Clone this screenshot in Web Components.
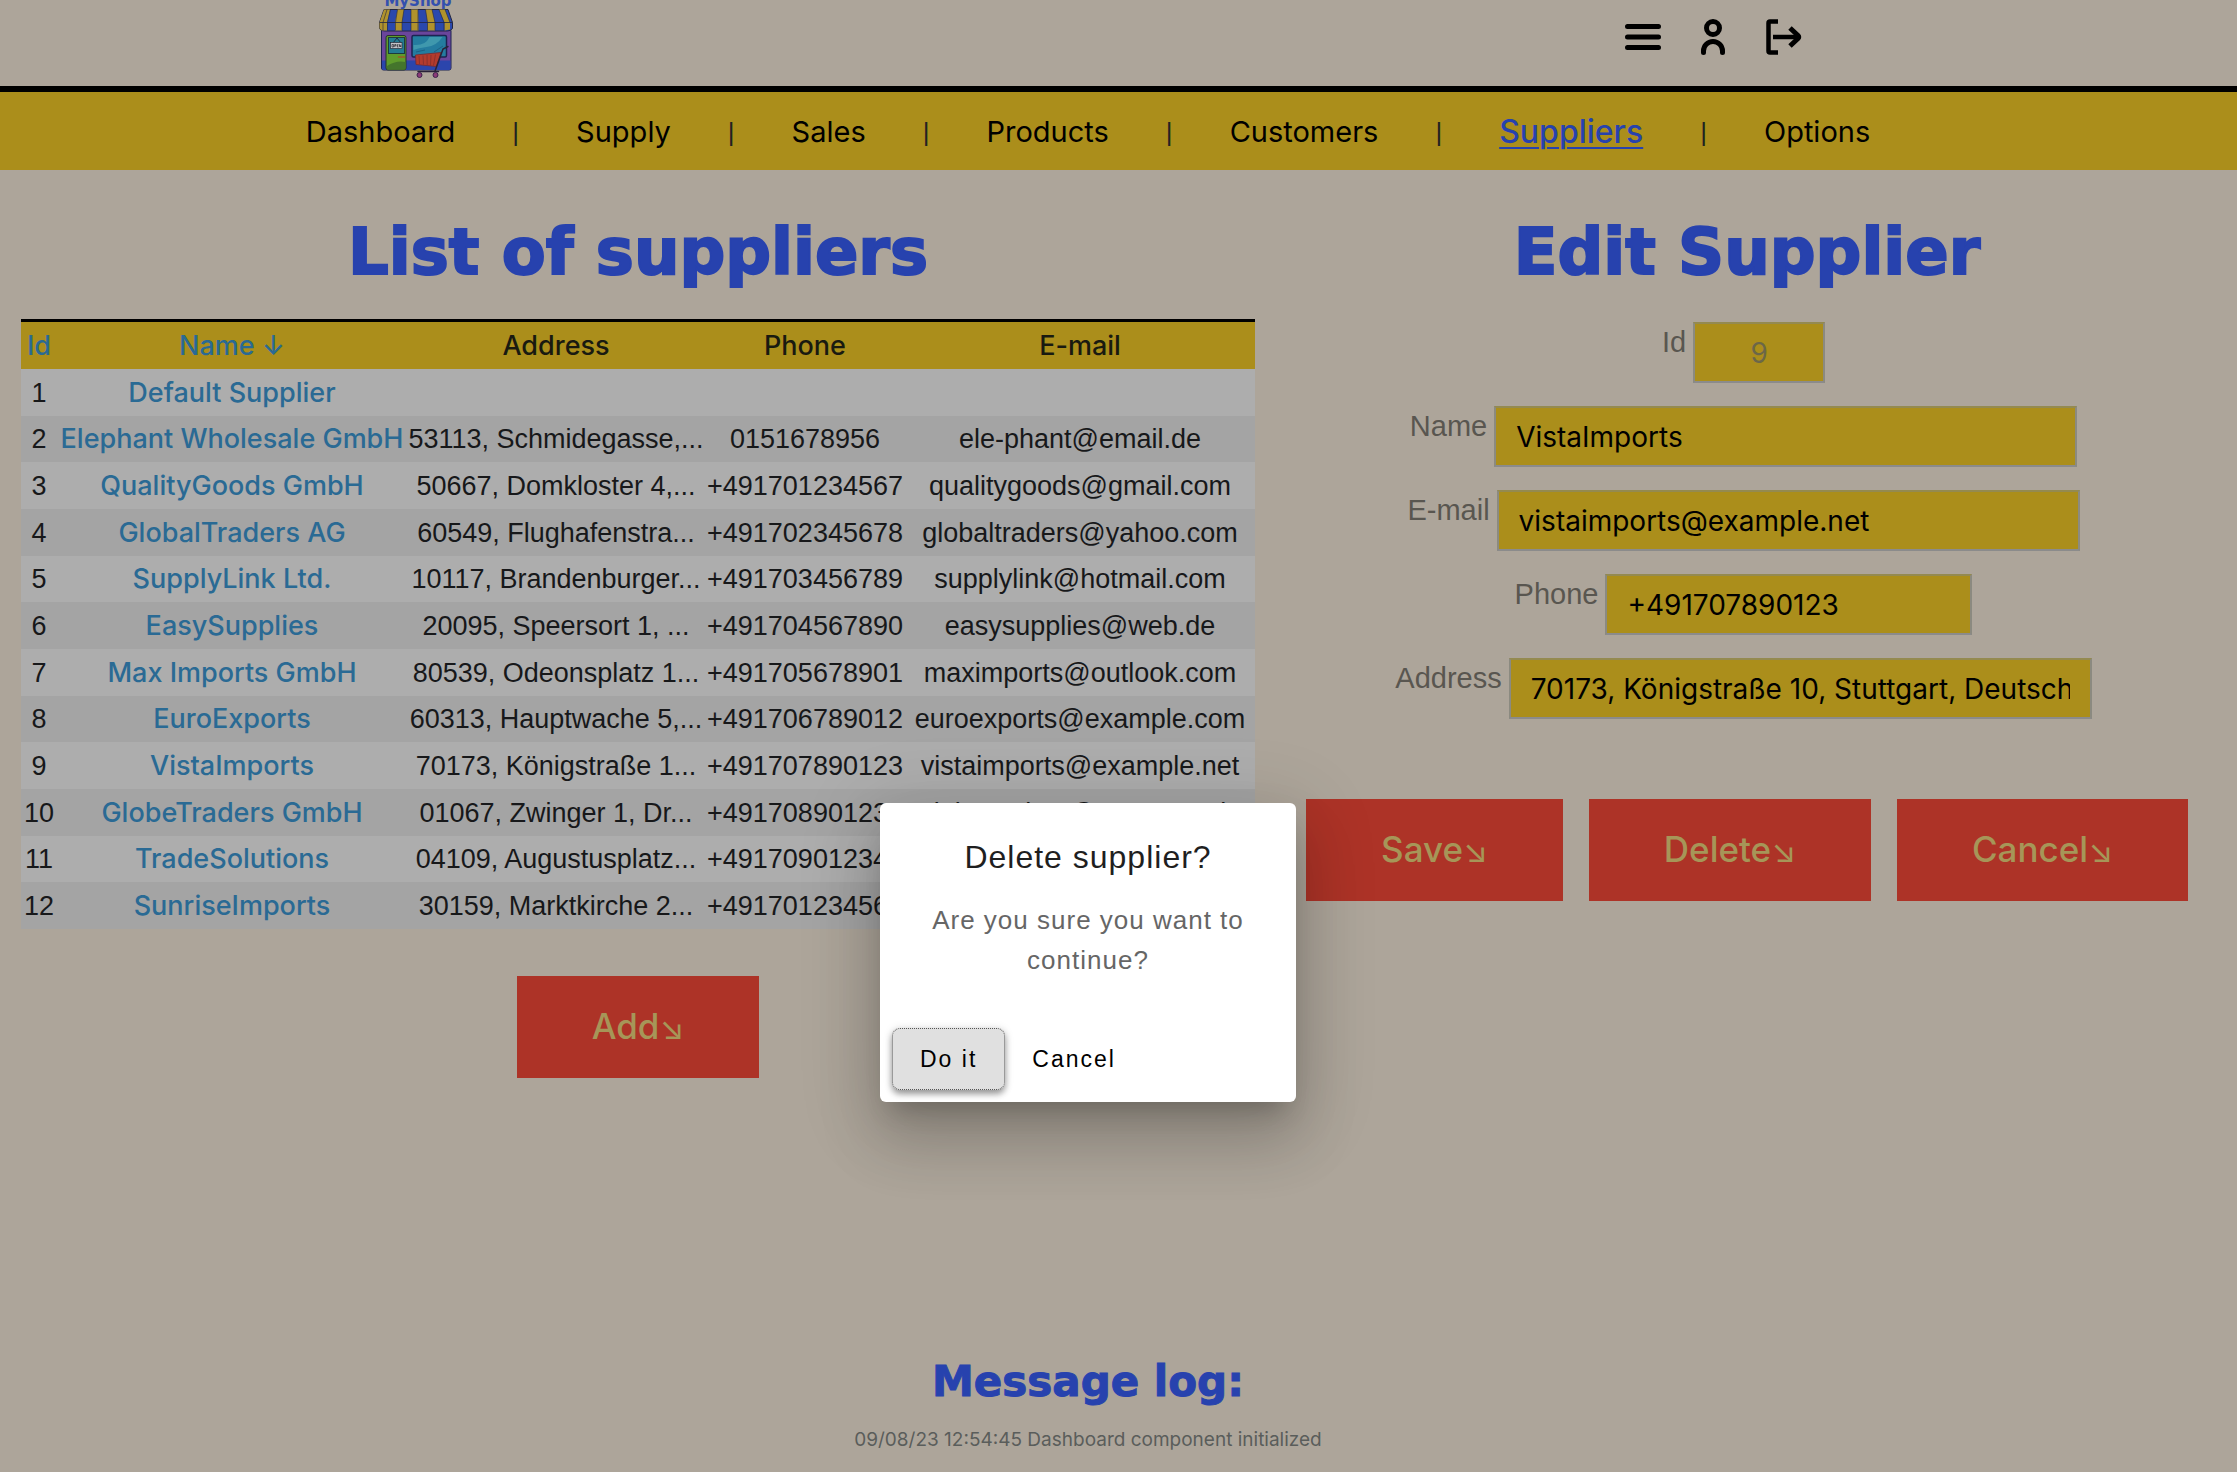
<!DOCTYPE html>
<html lang="en">
<head>
<meta charset="utf-8">
<title>MyShop – Suppliers</title>
<style>
  html { background: #ada59a; }
  body {
    margin: 0;
    min-height: 100vh;
    display: flex;
    flex-direction: column;
    position: relative;
    overflow-x: hidden;
    font-family: Inter, sans-serif;
    color: #000;
    --gold: #ab8e1b;
    --blue: #2742ae;
    --red: #ad3327;
    --link: #2a6a94;
    --display: "DejaVu Sans", sans-serif;
    --ui: Inter, sans-serif;
    --plain: "Liberation Sans", sans-serif;
  }
</style>
</head>
<body>
<shop-header></shop-header>
<shop-nav></shop-nav>
<shop-main>
  <shop-panel slot="list" heading="List of suppliers">
    <supplier-table></supplier-table>
    <shop-button slot="actions">Add</shop-button>
  </shop-panel>
  <shop-panel slot="edit" heading="Edit Supplier">
    <supplier-form></supplier-form>
    <shop-button slot="actions">Save</shop-button>
    <shop-button slot="actions">Delete</shop-button>
    <shop-button slot="actions">Cancel</shop-button>
  </shop-panel>
</shop-main>
<message-log>09/08/23 12:54:45 Dashboard component initialized</message-log>
<confirm-dialog>
  <span slot="title">Delete supplier?</span>
  Are you sure you want to continue?
</confirm-dialog>

<script>
const define = (name, html) => customElements.define(name, class extends HTMLElement {
  constructor() {
    super();
    this.attachShadow({ mode: "open" }).innerHTML = typeof html === "function" ? html(this) : html;
  }
});

define("shop-header", `
<style>
  :host { display: block; border-bottom: 6px solid #000; }
  header { height: 86px; display: flex; justify-content: space-between; padding: 0 434px 0 376px; }
  .logo { display: block; height: 80px; }
  nav { display: flex; gap: 30px; align-items: center; height: 74px; }
  button { border: 0; background: none; padding: 0; width: 40px; height: 40px; }
  svg { display: block; overflow: hidden; }
  .tool { fill: none; stroke: #000; stroke-width: 5; stroke-linecap: round; }
</style>
<header>
  <a class="logo" href="#home" aria-label="MyShop">
    <svg width="80" height="80" viewBox="376 0 80 80">
      <text x="418" y="6" text-anchor="middle" font-family="DejaVu Sans, sans-serif" font-weight="700" font-size="15" fill="#3350ae">MyShop</text>
      <rect x="381.500" y="29" width="69.500" height="41" rx="2" fill="#6a459c" stroke="#1d2452"/>
      <path d="M382 60.500h68.500v8q0 1.500-2 1.500H384q-2 0-2-1.500z" fill="#2b45ac"/>
      <path d="M384 9.500h64l4.500 13v6q-2 2.500-5 2.500h-63q-4 0-5-2.500v-6z" fill="#2a48ad" stroke="#222640"/>
      <path d="M384 9.500h6l-3 13v8h-5l-2.500-2v-6zM397.500 9.500h6.500l-2 13v8h-7v-8zM411 9.500h7l.5 13v8H411v-8zM425.500 9.500h6.500l3 13v8h-7.500v-8zM439 9.500h6l5 13v7l-5.500 1v-8z" fill="#b0922c"/>
      <path d="M379.500 22.500h73" stroke="#222640" stroke-width=".8"/>
      <path d="M387 9.500l-4 13v8M390.500 9.500l-3 13v8M397.500 9.500l-2 13v8M404 9.500l-2 13v8M411 9.500v21M418 9.500v21M425.500 9.500l2 13v8M432 9.500l3 13v8M439 9.500l5 13v8M445 9.500l5 13" stroke="#222640" stroke-width=".6" fill="none"/>
      <rect x="386" y="35.500" width="20" height="34.500" rx="2" fill="#5f9c2c" stroke="#26322e"/>
      <path d="M387 66q9-6 18.500-4v7.500H387z" fill="#44752c"/>
      <rect x="388.500" y="37.500" width="16" height="16" fill="#247b93" stroke="#1e3b3c"/>
      <path d="M393 43l4-5 4 5" fill="none" stroke="#1b1b29" stroke-width=".8"/>
      <rect x="390.500" y="42.500" width="11.500" height="6" fill="#c4c4c8" stroke="#1b1b29" stroke-width=".6"/>
      <path d="M392 44.500h1.500v2.500H392zM394.700 47v-2.500h1.300v1.300h-1.300M398.500 44.500h-1.200V47h1.200M397.300 45.700h1M399.500 47v-2.500l1.300 2.500v-2.500" fill="none" stroke="#15151d" stroke-width=".6"/>
      <path d="M398.500 57h6" stroke="#9c5a25" stroke-width="1.500" stroke-linecap="round"/>
      <rect x="412" y="35.500" width="34.500" height="21.500" rx="1.500" fill="#247c9f" stroke="#1d2452" stroke-width="1.500"/>
      <path d="M413.500 45q12 1 16-8h13q-6 9-16 10-8 1-13 3z" fill="#3f98ad"/>
      <path d="M416 52l9-2M434 52l9-6" stroke="#1d5f83" stroke-width="1"/>
      <path d="M415.500 55l25.500-2.500-4.500 14-20.500-2z" fill="#b33b2d" stroke="#722a33" stroke-width=".8"/>
      <path d="M419 56l.5 8M423 55.500l.5 9M427 55l.2 10M431 55l-.5 10.500M435.500 54.500l-2 11" stroke="#7d2c2b" stroke-width=".7"/>
      <path d="M448 46.500l-5 2.500-6.500 18-1.500 4M418 71.500h20.500" fill="none" stroke="#282238" stroke-width="1.500" stroke-linecap="round"/>
      <circle cx="419.500" cy="75" r="2.500" fill="#8c3b78" stroke="#3c244b"/>
      <circle cx="435.500" cy="75" r="2.500" fill="#8c3b78" stroke="#3c244b"/>
    </svg>
  </a>
  <nav aria-label="Account">
    <button aria-label="Menu"><svg class="tool" width="40" height="40" viewBox="0 0 40 40"><path d="M4.500 9.500h31M4.500 20h31M4.500 30.500h31"/></svg></button>
    <button aria-label="Profile"><svg class="tool" width="40" height="40" viewBox="0 0 40 40"><circle cx="20" cy="11" r="6.500"/><path d="M10.500 35.500v-1.500a9.500 9.500 0 0 1 19 0v1.500"/></svg></button>
    <button aria-label="Log out"><svg class="tool" width="40" height="40" viewBox="2 0 40 40"><path d="M16 4.500H8q-1.500 0-1.500 1.500v28q0 1.500 1.500 1.500H16" transform="translate(1 0)" stroke-width="4.500" stroke-linecap="butt"/><path d="M12 20H37" stroke-width="4.500" stroke-linecap="butt"/><path d="M29 11l8 7.500q1.500 1.500 0 3L29 29" stroke-width="5" stroke-linecap="butt"/></svg></button>
  </nav>
</header>`);

define("shop-nav", `
<style>
  :host { display: block; background: var(--gold); padding-right: 61px; }
  nav { height: 76px; padding-top: 2px; display: flex; justify-content: center; align-items: center; gap: 57px; font: 29px/40px var(--ui); }
  a { color: #000; text-decoration: none; }
  a[aria-current] { font-size: 32px; font-weight: 500; color: var(--blue); text-decoration: underline; text-decoration-thickness: 2px; text-underline-offset: 4px; }
  span { font: 26px/40px var(--plain); color: #222; }
</style>
<nav>${["Dashboard", "Supply", "Sales", "Products", "Customers", "Suppliers", "Options"].map(t =>
  `<a href="#${t.toLowerCase()}"${t === "Suppliers" ? ' aria-current="page"' : ""}>${t}</a>`).join("<span>|</span>")}</nav>`);

define("shop-main", `
<style>
  :host { display: grid; flex: 1; grid-template-columns: 1276fr 884fr; column-gap: 29px; padding: 48px 48px 0 0; align-items: start; }
</style>
<slot name="list"></slot><slot name="edit"></slot>`);

define("shop-panel", el => `
<style>
  :host { display: block; min-width: 0; }
  h1 { margin: 0; font: 700 64px/68px var(--display); color: var(--blue); text-align: center; -webkit-text-stroke: 2px var(--blue); white-space: nowrap; }
  .body { padding-top: 33px; }
  .actions { display: flex; justify-content: center; gap: 26px; }
  :host([slot="list"]) .actions { padding-top: 47px; }
  :host([slot="edit"]) .actions { padding-top: 80px; }
</style>
<h1>${el.getAttribute("heading")}</h1>
<div class="body"><slot></slot></div>
<div class="actions"><slot name="actions"></slot></div>`);

define("shop-button", `
<style>
  button { display: block; height: 102px; padding: 0 75px; border: 0; background: var(--red); color: #a69658; font: 500 35px/44px var(--ui); white-space: nowrap; }
  span { font-weight: 400; font-size: 32px; }
</style>
<button><slot></slot><span>↘</span></button>`);

const suppliers = [
  ["Default Supplier", "", "", ""],
  ["Elephant Wholesale GmbH", "53113, Schmidegasse,...", "0151678956", "ele-phant@email.de"],
  ["QualityGoods GmbH", "50667, Domkloster 4,...", "+491701234567", "qualitygoods@gmail.com"],
  ["GlobalTraders AG", "60549, Flughafenstra...", "+491702345678", "globaltraders@yahoo.com"],
  ["SupplyLink Ltd.", "10117, Brandenburger...", "+491703456789", "supplylink@hotmail.com"],
  ["EasySupplies", "20095, Speersort 1, ...", "+491704567890", "easysupplies@web.de"],
  ["Max Imports GmbH", "80539, Odeonsplatz 1...", "+491705678901", "maximports@outlook.com"],
  ["EuroExports", "60313, Hauptwache 5,...", "+491706789012", "euroexports@example.com"],
  ["VistaImports", "70173, Königstraße 1...", "+491707890123", "vistaimports@example.net"],
  ["GlobeTraders GmbH", "01067, Zwinger 1, Dr...", "+491708901234", "globetraders@company.de"],
  ["TradeSolutions", "04109, Augustusplatz...", "+491709012345", ""],
  ["SunriseImports", "30159, Marktkirche 2...", "+491701234567", ""]
];

define("supplier-table", `
<style>
  :host { display: block; padding: 0 21px; }
  table { width: 100%; table-layout: fixed; border-collapse: separate; border-spacing: 0; border-top: 3px solid #000; text-align: center; white-space: nowrap; }
  th, td { padding: 0; }
  th { height: 47px; background: var(--gold); font: 500 27px/32px var(--ui); color: #191a10; }
  th button { border: 0; padding: 0; background: none; font: inherit; color: var(--link); }
  td { height: 47px; font: 27px/32px var(--plain); color: #17181a; background: #adadad; }
  tr:nth-child(3n+2) td { height: 46px; }
  tr:nth-child(even) td { background: #a4a4a4; }
  td a { font: 500 27px/32px var(--ui); color: var(--link); text-decoration: none; }
  .id { width: 36px; } .name { width: 350px; } .address { width: 298px; } .phone { width: 200px; }
</style>
<table>
  <colgroup><col class="id"><col class="name"><col class="address"><col class="phone"><col></colgroup>
  <thead><tr><th><button>Id</button></th><th><button>Name ↓</button></th><th>Address</th><th>Phone</th><th>E-mail</th></tr></thead>
  <tbody>${suppliers.map(([name, ...rest], i) =>
    `<tr><td>${i + 1}</td><td><a href="#supplier-${i + 1}">${name}</a></td>${rest.map(c => `<td>${c}</td>`).join("")}</tr>`).join("")}</tbody>
</table>`);

define("supplier-form", `
<style>
  :host { display: block; padding: 3px 7px 0 0; }
  form { display: flex; flex-direction: column; gap: 23px; }
  .field { display: flex; justify-content: center; gap: 7px; }
  label { font: 29px/40px var(--plain); color: #595650; }
  input { box-sizing: border-box; width: 583px; height: 61px; padding: 0 20px; border: 2px solid #8b8a80; border-top-color: #948a50; border-bottom-color: #8b8b8b; background: var(--gold); font: 28px/36px var(--ui); color: #000; }
  #id { width: 132px; text-align: center; color: #6b6748; }
  #phone { width: 367px; }
</style>
<form>
  <div class="field"><label for="id">Id</label><input id="id" value="9" disabled></div>
  <div class="field"><label for="name">Name</label><input id="name" value="VistaImports"></div>
  <div class="field"><label for="email">E-mail</label><input id="email" value="vistaimports@example.net"></div>
  <div class="field"><label for="phone">Phone</label><input id="phone" value="+491707890123"></div>
  <div class="field"><label for="address">Address</label><input id="address" value="70173, Königstraße 10, Stuttgart, Deutschland"></div>
</form>`);

define("message-log", `
<style>
  :host { display: block; padding: 0 61px 18px 0; text-align: center; }
  h2 { margin: 0; font: 700 42px/48px var(--display); color: var(--blue); -webkit-text-stroke: 1px var(--blue); }
  p { margin: 0; padding-top: 20px; font: 19px/28px var(--ui); color: #5a5d5b; }
</style>
<h2>Message log:</h2>
<p><slot></slot></p>`);

define("confirm-dialog", `
<style>
  :host { position: absolute; inset: 803px 61px auto 0; display: flex; justify-content: center; }
  section { box-sizing: border-box; width: 416px; height: 299px; display: flex; flex-direction: column; background: #fff; border-radius: 6px; font-family: var(--plain); text-align: center;
    box-shadow: 0 18px 24px -11px rgba(0,0,0,.2), 0 38px 61px 5px rgba(0,0,0,.14), 0 14px 74px 13px rgba(0,0,0,.12); }
  h2 { margin: 0; padding: 32px 38px 0; font: 32px/44px var(--plain); letter-spacing: 1px; color: #1f1f1f; }
  p { margin: 0; padding: 21px 38px 0; font: 26px/40px var(--plain); letter-spacing: 1px; color: #666; flex: 1; }
  footer { display: flex; padding: 12px; }
  button { box-sizing: border-box; height: 62px; padding: 0 26px; border: 1px solid transparent; border-radius: 8px; background: none; color: #000; font: 23px/32px var(--plain); letter-spacing: 2px; }
  .primary { padding: 0 27px; background: #e0e0e0; border: 1px dotted #555; box-shadow: 0 4px 6px rgba(0,0,0,.35), 0 1px 10px rgba(0,0,0,.15); }
</style>
<section role="dialog" aria-modal="true" aria-labelledby="title">
  <h2 id="title"><slot name="title"></slot></h2>
  <p><slot></slot></p>
  <footer><button class="primary">Do it</button><button>Cancel</button></footer>
</section>`);
</script>
</body>
</html>
